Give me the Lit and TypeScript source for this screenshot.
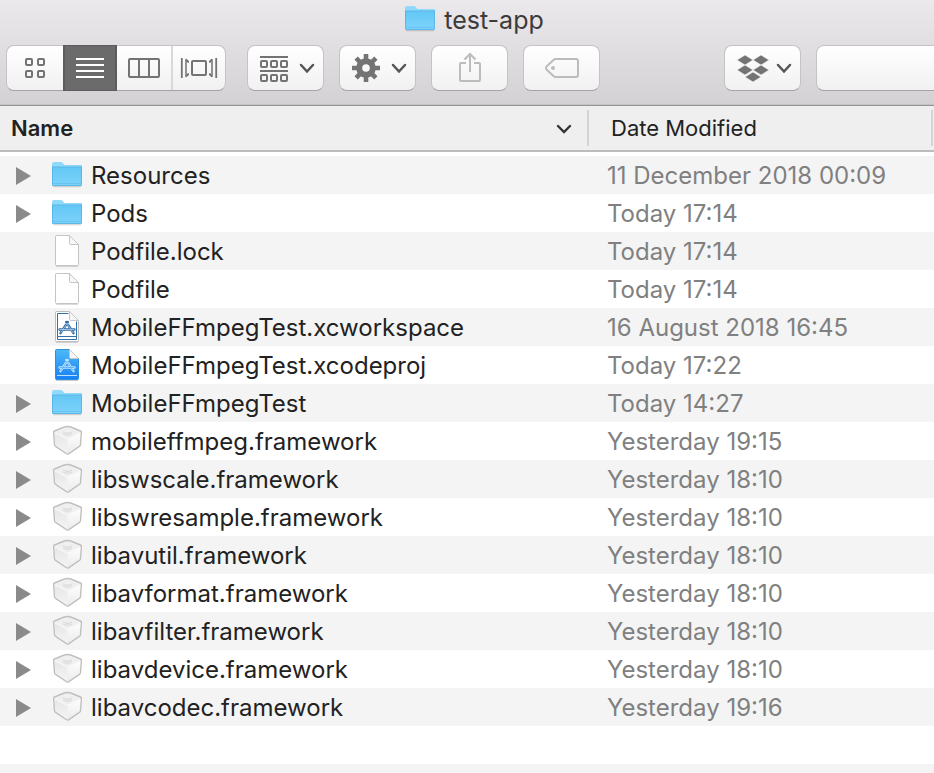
import { LitElement, html, css, svg, TemplateResult } from "lit";
import { customElement, property } from "lit/decorators.js";
import { classMap } from "lit/directives/class-map.js";

type Kind = "folder" | "doc" | "workspace" | "project" | "framework";
interface Entry {
  name: string;
  date: string;
  kind: Kind;
}

const entries: Entry[] = [
  { name: "Resources", date: "11 December 2018 00:09", kind: "folder" },
  { name: "Pods", date: "Today 17:14", kind: "folder" },
  { name: "Podfile.lock", date: "Today 17:14", kind: "doc" },
  { name: "Podfile", date: "Today 17:14", kind: "doc" },
  { name: "MobileFFmpegTest.xcworkspace", date: "16 August 2018 16:45", kind: "workspace" },
  { name: "MobileFFmpegTest.xcodeproj", date: "Today 17:22", kind: "project" },
  { name: "MobileFFmpegTest", date: "Today 14:27", kind: "folder" },
  { name: "mobileffmpeg.framework", date: "Yesterday 19:15", kind: "framework" },
  { name: "libswscale.framework", date: "Yesterday 18:10", kind: "framework" },
  { name: "libswresample.framework", date: "Yesterday 18:10", kind: "framework" },
  { name: "libavutil.framework", date: "Yesterday 18:10", kind: "framework" },
  { name: "libavformat.framework", date: "Yesterday 18:10", kind: "framework" },
  { name: "libavfilter.framework", date: "Yesterday 18:10", kind: "framework" },
  { name: "libavdevice.framework", date: "Yesterday 18:10", kind: "framework" },
  { name: "libavcodec.framework", date: "Yesterday 19:16", kind: "framework" },
];

const page = "M5.5 2.5H18.5L27.5 11.5V31.5Q27.5 32.5 26.5 32.5H5.5Q4.5 32.5 4.5 31.5V3.5Q4.5 2.5 5.5 2.5Z";

const folderArt = svg`
  <defs>
    <linearGradient id="f" x1="0" y1="0" x2="0" y2="1">
      <stop offset="0" stop-color="#64c7f5"/><stop offset="1" stop-color="#7dd3fb"/>
    </linearGradient>
  </defs>
  <path d="M2 29.5H30" stroke="#000" stroke-opacity=".15" stroke-width="1.5"/>
  <path d="M1 7Q1 5 3 5H9.5Q11 5 12 6.2L13.5 8H30Q31 8 31 9V28Q31 29 30 29H2Q1 29 1 28Z" fill="#8fd9fa"/>
  <path d="M1 10H31V28Q31 29 30 29H2Q1 29 1 28Z" fill="url(#f)"/>
  <path d="M1 10H31" stroke="#5db8e6"/>
  <path d="M1.5 10V27.5Q1.5 28.5 2.5 28.5H29.5Q30.5 28.5 30.5 27.5V10" fill="none" stroke="#55b2e2" stroke-opacity=".8"/>
  <path d="M2 26.5H30" stroke="#5db9ea" stroke-opacity=".6"/>`;

const compass = (line: string, core: string) => svg`
  <g fill="none" stroke-linecap="round">
    <path d="M15.200 13L22.500 24.200M16.800 13L9.500 24.200M8.500 20.500H23.500" stroke=${line} stroke-width="2.400"/>
    <path d="M16 14.500L22 23.600M16 14.500L10 23.600M9 20.500H23" stroke=${core} stroke-width=".8"/>
  </g>`;

const fold = svg`
  <path d="M18.5 2.5V10.5Q18.5 11.5 19.5 11.5H27.5Z" fill="#f7f7f7" stroke="#c6c6c6"/>`;

const art: Record<Kind, TemplateResult> = {
  folder: folderArt,
  doc: svg`
    <path d="M5 33.5H27" stroke="#000" stroke-opacity=".14"/>
    <path d=${page} fill="#fff" stroke="#c4c4c4" stroke-linejoin="round"/>${fold}`,
  workspace: svg`
    <path d="M5 33.5H27" stroke="#000" stroke-opacity=".14"/>
    <path d=${page} fill="#fff" stroke="#bdbdbd" stroke-linejoin="round"/>
    <path d="M17.500 4.500H6.500V30.500H25.500V12.500M6.500 27.500H25.500" fill="none" stroke="#336fa9"/>
    ${compass("#2f6ca6", "#b5cfe8")}${fold}`,
  project: svg`
    <defs>
      <linearGradient id="p" x1="0" y1="0" x2="0" y2="1">
        <stop offset="0" stop-color="#4fb9f8"/><stop offset="1" stop-color="#1580f5"/>
      </linearGradient>
    </defs>
    <path d="M5 33.5H27" stroke="#000" stroke-opacity=".2"/>
    <path d=${page} fill="url(#p)" stroke="#2c8fe0" stroke-linejoin="round"/>
    <path d="M6 28.5H26" stroke="#c0e2ff"/>
    ${compass("#c4e5ff", "#4ba8f5")}${fold}`,
  framework: svg`
    <defs>
      <linearGradient id="l" x1="0" y1="0" x2="0" y2="1">
        <stop offset="0" stop-color="#e6e6e6"/><stop offset="1" stop-color="#f4f4f4"/>
      </linearGradient>
      <linearGradient id="r" x1="0" y1="0" x2="0" y2="1">
        <stop offset="0" stop-color="#fdfdfd"/><stop offset="1" stop-color="#ececec"/>
      </linearGradient>
    </defs>
    <path d="M3.500 8L12 4.500Q16.500 2.500 21 4.500L29.500 8Q30.500 8.500 30.400 9.500L29.500 21.500Q29.500 22.500 28.700 23.100L17.500 30.800Q16.500 31.500 15.500 30.800L4.300 23.100Q3.500 22.500 3.500 21.500L2.600 9.500Q2.500 8.500 3.500 8Z"
      fill="#efefef" stroke="#c0c0c0" stroke-width="1.400"/>
    <path d="M3.600 10L16.500 16.500V30L4.500 22Z" fill="url(#l)"/>
    <path d="M29.400 10L16.500 16.500V30L28.500 22Z" fill="url(#r)"/>
    <path d="M4 9.800L16.500 16.500L29 9.800" fill="none" stroke="#fafafa"/>
    <path d="M12 8V11.500Q16.500 14 21 11.500V8Z" fill="#d8d8d8"/>
    <ellipse cx="16.500" cy="7.500" rx="4.500" ry="2" fill="#f0f0f0"/>
    <path d="M12 10Q16.500 12.500 21 10" fill="none" stroke="#ececec" stroke-width="1.200"/>`,
};

const fileIcon = (kind: Kind) =>
  html`<svg class="file" viewBox="0 2 32 34" aria-hidden="true">${art[kind]}</svg>`;

const glyph = (body: TemplateResult) =>
  html`<svg class="glyph" viewBox="0 0 34 32" aria-hidden="true">${body}</svg>`;

const squares = (points: number[][]) =>
  points.map(([x, y]) => svg`<rect x=${x} y=${y} width="6" height="6" rx="1"/>`);

const gridGlyph = glyph(svg`<g fill="none" stroke="#737373" stroke-width="2">
  ${squares([[8, 7], [20, 7], [8, 19], [20, 19]])}</g>`);

const listGlyph = glyph(svg`<path d="M3 7H31M3 13H31M3 19H31M3 25H31" stroke="#fff" stroke-width="2"/>`);

const columnsGlyph = glyph(svg`<g fill="none" stroke="#737373" stroke-width="2">
  <rect x="2" y="7" width="30" height="18" rx="1"/><path d="M12 7V25M22 7V25"/></g>`);

const flowGlyph = glyph(svg`<g fill="none" stroke="#737373">
  <rect x="10" y="9" width="14" height="14" rx="1" stroke-width="2"/>
  <path d="M-.2 6V26M34.200 6V26" stroke-width="1.800"/>
  <path d="M4 7V25M30 7V25" stroke-width="1.500"/></g>
  <path d="M4 6.500L7 9V11L4.500 10ZM4 25.500L7 23V21L4.500 22ZM30 6.500L27 9V11L29.500 10ZM30 25.500L27 23V21L29.500 22Z" fill="#737373"/>`);

const arrangeGlyph = glyph(svg`<g fill="none" stroke="#737373" stroke-width="2">
  <path d="M2 5H30M2 19H30"/>${squares([[3, 9], [13, 9], [23, 9], [3, 23], [13, 23], [23, 23]])}</g>`);

const gearGlyph = glyph(svg`<g fill="none" stroke="#737373">
  <circle cx="16" cy="16" r="6.800" stroke-width="6"/>
  <g stroke-width="4.600">${[0, 45, 90, 135].map(
    (a) => svg`<path d="M16 2V8M16 24V30" transform="rotate(${a} 16 16)"/>`,
  )}</g></g>`);

const shareGlyph = glyph(svg`<g fill="none" stroke="#bcbcbc" stroke-width="2">
  <path d="M13 11H8Q7 11 7 12V28Q7 29 8 29H26Q27 29 27 28V12Q27 11 26 11H21"/>
  <path d="M17 20V2M11.500 7.500L17 2L22.500 7.500"/></g>`);

const tagGlyph = glyph(svg`
  <path d="M10.500 7H31Q33 7 33 9V23Q33 25 31 25H10.500Q9.500 25 8.500 24L2 18Q0 16 2 14L8.500 8Q9.500 7 10.500 7Z"
    fill="none" stroke="#bcbcbc" stroke-width="2"/>
  <circle cx="8" cy="16" r="2" fill="#bcbcbc"/>`);

const dropboxGlyph = glyph(svg`<path fill="#737373"
  d="M10 3L18 8L10 13L2 8ZM26 3L34 8L26 13L18 8ZM10 13L18 18L10 23L2 18ZM26 13L34 18L26 23L18 18ZM18 20L26 25L18 30L10 25Z"
  stroke="#f7f7f7" stroke-width=".6"/>`);

const chevron = html`<svg class="chevron" viewBox="0 0 16 16" aria-hidden="true">
  <path d="M2 5L8 11.500L14 5" fill="none" stroke="#555" stroke-width="2.500" stroke-linecap="round"/></svg>`;

@customElement("finder-toolbar")
export class FinderToolbar extends LitElement {
  @property() heading = "";

  static styles = css`
    :host {
      display: block;
      overflow: hidden;
      background: linear-gradient(#ebe9eb, #d3d1d4);
      border-bottom: 1px solid #959395;
      box-shadow: inset 0 -1px #c3c1c4;
    }
    .title {
      display: flex;
      justify-content: center;
      align-items: center;
      gap: 8px;
      height: 39px;
      margin: 0 0 6px;
      padding-left: 14px;
      font-size: 25px;
      font-weight: 400;
      color: #3c3b3c;
    }
    .file {
      width: 32px;
      height: 34px;
    }
    .tools {
      display: flex;
      gap: 15px;
      padding: 0 0 14px 6px;
    }
    .views {
      display: flex;
      margin-right: 6px;
    }
    .button,
    .views,
    .search {
      box-sizing: border-box;
      height: 46px;
      border: 1px solid #c5c3c6;
      border-bottom-color: #a5a3a6;
      border-radius: 8px;
      background: linear-gradient(#fff, #f1f1f1);
    }
    .button,
    .segment {
      display: flex;
      align-items: center;
      margin: 0;
      flex: none;
    }
    .button {
      width: 77px;
      padding: 0 10px;
      gap: 7px;
    }
    .single {
      justify-content: center;
    }
    .segment {
      box-sizing: border-box;
      justify-content: center;
      width: 54px;
      padding: 0;
      border: 0;
      background: none;
    }
    .first {
      width: 56px;
    }
    .active {
      height: 46px;
      margin: -1px 0;
      background: #6b6b6b;
      border: solid #5c5c5c;
      border-width: 1px 2px;
    }
    .last {
      border-left: 2px solid #d9d9d9;
    }
    .glyph {
      width: 34px;
      height: 32px;
      flex: none;
      overflow: visible;
    }
    .chevron {
      width: 16px;
      height: 16px;
      flex: none;
    }
    .spacer {
      flex: 1;
      margin-right: -5px;
    }
    .search {
      flex: none;
      width: 140px;
      margin-right: -22px;
      padding: 0 12px;
      font: inherit;
    }
  `;

  render() {
    return html`
      <h1 class="title">${fileIcon("folder")}<span>${this.heading}</span></h1>
      <div class="tools">
        <div class="views" role="group" aria-label="View">
          <button class="segment first" aria-label="Icons">${gridGlyph}</button>
          <button class="segment active" aria-label="List" aria-pressed="true">${listGlyph}</button>
          <button class="segment" aria-label="Columns">${columnsGlyph}</button>
          <button class="segment last" aria-label="Cover Flow">${flowGlyph}</button>
        </div>
        <button class="button" aria-label="Arrange">${arrangeGlyph}${chevron}</button>
        <button class="button" aria-label="Actions">${gearGlyph}${chevron}</button>
        <button class="button single" aria-label="Share" disabled>${shareGlyph}</button>
        <button class="button single" aria-label="Tags" disabled>${tagGlyph}</button>
        <div class="spacer"></div>
        <button class="button" aria-label="Dropbox">${dropboxGlyph}${chevron}</button>
        <input class="search" type="search" aria-label="Search" />
      </div>
    `;
  }
}

@customElement("app-root")
export class AppRoot extends LitElement {
  static styles = css`
    :host {
      display: flex;
      flex-direction: column;
      min-height: 100vh;
      background: #fff;
      font-family: Inter, "Noto Sans", sans-serif;
      font-size: 24px;
      line-height: 30px;
      color: #222;
    }
    .list {
      width: 100%;
      border-collapse: separate;
      border-spacing: 0;
      table-layout: fixed;
    }
    .date-col {
      width: 345px;
    }
    th {
      height: 44px;
      padding: 0;
      background: #efefef;
      border-bottom: 2px solid #bcbcbc;
      font-size: 22px;
      font-weight: 400;
      text-align: left;
    }
    th:last-child {
      padding-right: 1px;
    }
    .head {
      display: flex;
      justify-content: space-between;
      align-items: center;
      box-sizing: border-box;
      width: 100%;
      height: 36px;
      padding: 0 15px 0 11px;
      border: 0;
      border-right: 2px solid #d4d4d4;
      background: none;
      font: inherit;
      color: inherit;
    }
    .date-head {
      padding-left: 22px;
    }
    .sorted {
      font-weight: 600;
    }
    .chevron {
      width: 16px;
      height: 16px;
    }
    .rows::before {
      content: "";
      display: block;
      height: 4px;
    }
    td {
      height: 36px;
      padding: 2px 0 0;
      white-space: nowrap;
    }
    .striped td {
      background: #f4f4f4;
    }
    .cell {
      display: flex;
      align-items: center;
      padding-left: 16px;
    }
    .disclosure,
    .leaf {
      width: 15px;
      height: 18px;
      margin-right: 20px;
    }
    .disclosure {
      display: flex;
      padding: 0;
      border: 0;
      background: none;
    }
    .file {
      width: 32px;
      height: 34px;
      margin-right: 8px;
    }
    td.date {
      padding-left: 18px;
      color: #808080;
    }
    .rest {
      flex: 1;
      min-height: 38px;
      background: repeating-linear-gradient(#fff 0 38px, #f4f4f4 38px 76px);
    }
  `;

  private row(entry: Entry, index: number) {
    const expandable = entry.kind === "folder" || entry.kind === "framework";
    return html`<tr class=${classMap({ striped: index % 2 === 0 })}>
      <td>
        <div class="cell">
          ${expandable
            ? html`<button class="disclosure" aria-label="Expand ${entry.name}">
                <svg width="15" height="18" viewBox="0 0 15 18"><path d="M0 0L15 9L0 18Z" fill="#8a8a8a" /></svg>
              </button>`
            : html`<span class="leaf"></span>`}
          ${fileIcon(entry.kind)}<span>${entry.name}</span>
        </div>
      </td>
      <td class="date">${entry.date}</td>
    </tr>`;
  }

  render() {
    return html`
      <finder-toolbar heading="test-app"></finder-toolbar>
      <table class="list">
        <colgroup><col /><col class="date-col" /></colgroup>
        <thead>
          <tr>
            <th aria-sort="ascending">
              <button class="head sorted">
                <span>Name</span>
                <svg class="chevron" viewBox="0 0 16 16" aria-hidden="true">
                  <path d="M2 6L8 12L14 6" fill="none" stroke="#333" stroke-width="2.400" stroke-linecap="round" />
                </svg>
              </button>
            </th>
            <th><button class="head date-head">Date Modified</button></th>
          </tr>
        </thead>
        <tbody class="rows">${entries.map((e, i) => this.row(e, i))}</tbody>
      </table>
      <div class="rest"></div>
    `;
  }
}
